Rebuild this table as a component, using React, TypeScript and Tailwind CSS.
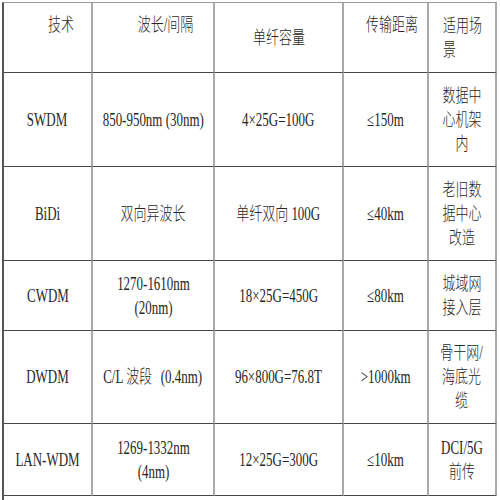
import React from 'react'

type Cell = React.ReactNode

const rows: Cell[][] = [
  ['SWDM', '850-950nm (30nm)', '4×25G=100G', '≤150m', <>数据中<br />心机架<br />内</>],
  ['BiDi', '双向异波长', '单纤双向 100G', '≤40km', <>老旧数<br />据中心<br />改造</>],
  ['CWDM', <>1270-1610nm<br />(20nm)</>, '18×25G=450G', '≤80km', <>城域网<br />接入层</>],
  [
    'DWDM',
    <>C/L 波段<span className="ml-[12px]">(0.4nm)</span></>,
    '96×800G=76.8T',
    '>1000km',
    <>骨干网/<br />海底光<br />缆</>,
  ],
  ['LAN-WDM', <>1269-1332nm<br />(4nm)</>, '12×25G=300G', '≤10km', <>DCI/5G<br />前传</>],
]

const vline = 'border-r-2 border-r-[#a9a9a9]'
const hline = 'border-b border-b-[#474747]'
// the source image is squeezed sideways, so text is drawn tall and narrowed
const txt = 'inline-block whitespace-nowrap scale-x-[0.72]'

export default function App() {
  return (
    <div className="min-h-[500px] w-[500px] overflow-hidden bg-white pl-[2px] pt-[2px] font-['Liberation_Serif','Noto_Sans_CJK_SC',serif] text-[18px] font-light leading-[24px] text-[#262626]">
      <div className="grid w-[495px] grid-cols-[89px_122px_129px_85px_68px] grid-rows-[70px_94px_94px_70px_93px_72px_20px] border-l-2 border-t border-l-[#565656] border-t-[#9a9a9a]">
        {/* 表头 */}
        <div className={`flex items-start justify-center pl-[27px] pt-[10px] ${vline} ${hline}`}>
          <span className={txt}>技术</span>
        </div>
        <div className={`flex items-start justify-center pl-[26px] pt-[10px] ${vline} ${hline}`}>
          <span className={txt}>波长/间隔</span>
        </div>
        <div className={`flex items-center justify-center ${vline} ${hline}`}>
          <span className={txt}>单纤容量</span>
        </div>
        <div className={`flex items-start justify-center pl-[13px] pt-[10px] ${vline} ${hline}`}>
          <span className={txt}>传输距离</span>
        </div>
        <div className={`flex items-center pl-[14px] ${vline} ${hline}`}>
          <span className={`${txt} origin-left`}>适用场<br />景</span>
        </div>

        {rows.map((row, i) =>
          row.map((cell, j) => (
            <div
              key={`${i}-${j}`}
              className={`flex items-center justify-center text-center ${vline} ${hline}`}
            >
              <span className={txt}>{cell}</span>
            </div>
          )),
        )}

        {/* 备注行 */}
        <div className="col-span-5" />
      </div>
    </div>
  )
}
